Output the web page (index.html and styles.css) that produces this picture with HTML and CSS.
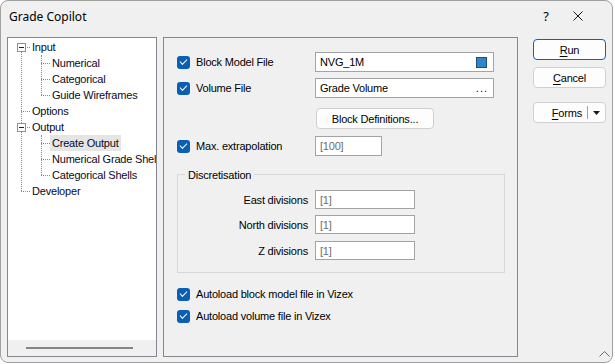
FILE: index.html
```html
<!DOCTYPE html>
<html lang="en">
<head>
    <meta charset="utf-8"/>
    <title>Grade Copilot</title>
    <link rel="stylesheet" href="styles.css">
</head>
<body>
<div class="window">
    <div class="titlebar">
        <span class="title">Grade Copilot</span>
        <span class="help">?</span>
        <span class="close">
            <svg width="10" height="10" viewBox="0 0 10 10"><path d="M0.5 0.5 L9.5 9.5 M9.5 0.5 L0.5 9.5" stroke="#1a1a1a" stroke-width="1" fill="none"/></svg>
        </span>
    </div>
    <div class="client">
        <div class="tree">
            <ul class="tree-root">
                <li><div class="label"><span class="exp"></span><span class="text">Input</span></div>
                    <ul class="sub">
                        <li><div class="label"><span class="text">Numerical</span></div></li>
                        <li><div class="label"><span class="text">Categorical</span></div></li>
                        <li><div class="label"><span class="text">Guide Wireframes</span></div></li>
                    </ul>
                </li>
                <li><div class="label"><span class="text">Options</span></div></li>
                <li><div class="label"><span class="exp"></span><span class="text">Output</span></div>
                    <ul class="sub">
                        <li><div class="label"><span class="text selected">Create Output</span></div></li>
                        <li><div class="label"><span class="text">Numerical Grade Shell</span></div></li>
                        <li><div class="label"><span class="text">Categorical Shells</span></div></li>
                    </ul>
                </li>
                <li><div class="label"><span class="text">Developer</span></div></li>
            </ul>
            <div class="hscroll"><div class="thumb"></div></div>
        </div>

        <div class="panel">
            <div class="line">
                <label class="check"><span class="box"></span>Block Model File</label>
                <div class="field wide">NVG_1M<span class="swatch"></span></div>
            </div>
            <div class="line gap6">
                <label class="check"><span class="box"></span>Volume File</label>
                <div class="field wide">Grade Volume<span class="dots">...</span></div>
            </div>
            <div class="line gap10">
                <span></span>
                <button class="btn defs">Block Definitions...</button>
            </div>
            <div class="line gap8">
                <label class="check"><span class="box"></span>Max. extrapolation</label>
                <div class="field short hint">[100]</div>
            </div>

            <div class="group">
                <span class="legend">Discretisation</span>
                <div class="grow first">
                    <span class="glabel">East divisions</span>
                    <div class="field hint">[1]</div>
                </div>
                <div class="grow">
                    <span class="glabel">North divisions</span>
                    <div class="field hint">[1]</div>
                </div>
                <div class="grow g7">
                    <span class="glabel">Z divisions</span>
                    <div class="field hint">[1]</div>
                </div>
            </div>

            <label class="check auto first"><span class="box"></span>Autoload block model file in Vizex</label>
            <label class="check auto"><span class="box"></span>Autoload volume file in Vizex</label>
        </div>

        <div class="actions">
            <button class="btn run"><u>R</u>un</button>
            <button class="btn cancel"><u>C</u>ancel</button>
            <button class="btn forms"><span><u>F</u>orms</span><span class="sep"></span>
                <svg width="7" height="4" viewBox="0 0 7 4"><path d="M0 0 H7 L3.5 4 Z" fill="#1a1a1a"/></svg>
            </button>
            <svg class="grip" width="11" height="6" viewBox="0 0 11 6"><path d="M0.5 5.5 L5.5 0.5 L10.5 5.5" stroke="#6a6a6a" fill="none"/></svg>
        </div>
    </div>
</div>
</body>
</html>
```

FILE: styles.css
```css
* {
    box-sizing: border-box;
}
body {
    margin: 0;
    background: #ffffff;
    font-family: "Liberation Sans", Arial, sans-serif;
    font-size: 11px;
    letter-spacing: -0.2px;
    color: #000;
}
.window {
    width: 613px;
    height: 363px;
    background: #f0f0f0;
    border: 1px solid #a0a0a0;
    border-radius: 8px;
    display: flex;
    flex-direction: column;
    overflow: hidden;
}

/* title bar */
.titlebar {
    height: 30px;
    display: flex;
    align-items: center;
    padding-left: 8px;
    font-family: "Noto Sans", sans-serif;
    font-size: 12px;
    letter-spacing: 0;
}
.titlebar .title {
    flex: 1;
}
.titlebar .help {
    width: 20px;
    text-align: center;
    font-size: 13px;
    margin-right: 12px;
}
.titlebar .close {
    width: 20px;
    display: flex;
    justify-content: center;
    margin-right: 24px;
}

.client {
    flex: 1;
    display: flex;
    gap: 6px;
    padding: 6px 6px 5px 6px;
}

/* tree */
.tree {
    width: 150px;
    background: #fff;
    border: 1px solid #828790;
    display: flex;
    flex-direction: column;
    overflow: hidden;
    white-space: nowrap;
}
.tree ul {
    list-style: none;
    margin: 0;
    padding: 0;
    position: relative;
}
.tree-root {
    flex: 1;
    padding-top: 1px !important;
}
.tree-root::before {
    content: "";
    position: absolute;
    left: 13px;
    top: 9px;
    height: 144px;
    border-left: 1px dotted #8a8a8a;
}
.tree .sub::before {
    content: "";
    position: absolute;
    left: 33px;
    top: 0;
    height: 40px;
    border-left: 1px dotted #8a8a8a;
}
.tree .label {
    position: relative;
    height: 16px;
    line-height: 16px;
    padding-left: 22px;
}
.tree .label::before {
    content: "";
    position: absolute;
    left: 13px;
    top: 8px;
    width: 9px;
    border-top: 1px dotted #8a8a8a;
}
.tree .sub .label {
    padding-left: 42px;
}
.tree .sub .label::before {
    left: 33px;
}
.tree .text {
    display: inline-block;
    padding: 0 2px;
    color: #0a0a23;
}
.tree .text.selected {
    background: #e5e5e5;
}
.tree .exp {
    position: absolute;
    left: 9px;
    top: 4px;
    width: 9px;
    height: 9px;
    border: 1px solid #919191;
    background: #fff;
    z-index: 1;
}
.tree .exp::after {
    content: "";
    position: absolute;
    left: 1px;
    top: 3px;
    width: 5px;
    height: 1px;
    background: #222;
}
.hscroll {
    height: 16px;
    background: #f0f0f0;
    display: flex;
    align-items: center;
    padding-left: 18px;
}
.hscroll .thumb {
    width: 107px;
    height: 2px;
    background: #858585;
}

/* main panel */
.panel {
    width: 355px;
    border: 1px solid #828790;
    padding: 14px 0 0 13px;
    display: flex;
    flex-direction: column;
}
.line {
    display: grid;
    grid-template-columns: 138px auto;
    align-items: center;
    height: 20px;
}
.gap6 { margin-top: 6px; }
.gap8 { margin-top: 8px; }
.gap10 { margin-top: 10px; }
.check {
    display: flex;
    align-items: center;
    gap: 6px;
    height: 16px;
}
.check .box {
    width: 13px;
    height: 13px;
    border-radius: 3px;
    background: #0a5fb4;
    position: relative;
}
.check .box::after {
    content: "";
    position: absolute;
    left: 3px;
    top: 3px;
    width: 6px;
    height: 3px;
    border-left: 1px solid #fff;
    border-bottom: 1px solid #fff;
    transform: rotate(-45deg);
}
.field {
    height: 20px;
    border: 1px solid #a3a3a3;
    background: #fff;
    display: flex;
    align-items: center;
    padding: 0 5px 0 4px;
}
.field.wide {
    width: 179px;
    justify-content: space-between;
}
.field.short {
    width: 67px;
}
.field.hint {
    color: #6d6d6d;
}
.swatch {
    width: 11px;
    height: 11px;
    background: #2e86c9;
    border: 1px solid #1d4f7c;
    margin-right: 1px;
}
.dots {
    letter-spacing: 1px;
}
.btn {
    font: inherit;
    letter-spacing: inherit;
    color: #000;
    height: 21px;
    background: #fdfdfd;
    border: 1px solid #d0d0d0;
    border-radius: 4px;
    padding: 0;
}
.btn u {
    text-decoration-thickness: 1px;
    text-underline-offset: 2px;
}
.defs {
    width: 118px;
    margin-left: 1px;
}

.group {
    width: 328px;
    margin-top: 18px;
    border: 1px solid #d8d8d8;
    display: flex;
    flex-direction: column;
    padding-bottom: 12px;
}
.group .legend {
    align-self: flex-start;
    margin: -6px 0 0 7px;
    padding: 0 3px;
    line-height: 13px;
    background: #f0f0f0;
}
.grow {
    display: grid;
    grid-template-columns: 130px 100px;
    column-gap: 7px;
    align-items: center;
    margin-top: 6px;
}
.grow.first { margin-top: 8px; }
.grow.g7 { margin-top: 7px; }
.grow .field {
    height: 19px;
}
.glabel {
    text-align: right;
}
.auto {
    margin-top: 6px;
}
.auto.first {
    margin-top: 13px;
}

/* buttons */
.actions {
    width: 73px;
    margin-left: 9px;
    display: flex;
    flex-direction: column;
}
.actions .run {
    margin-top: 2px;
    border-color: #0067c0;
}
.actions .cancel {
    margin-top: 7px;
}
.actions .forms {
    margin-top: 14px;
    display: flex;
    align-items: center;
    justify-content: flex-end;
    padding-right: 5px;
}
.forms .sep {
    width: 1px;
    height: 13px;
    background: #a0a0a0;
    margin: 0 5px;
}
.grip {
    margin-top: auto;
    align-self: flex-end;
    margin-right: -4px;
    margin-bottom: 0;
}
```
